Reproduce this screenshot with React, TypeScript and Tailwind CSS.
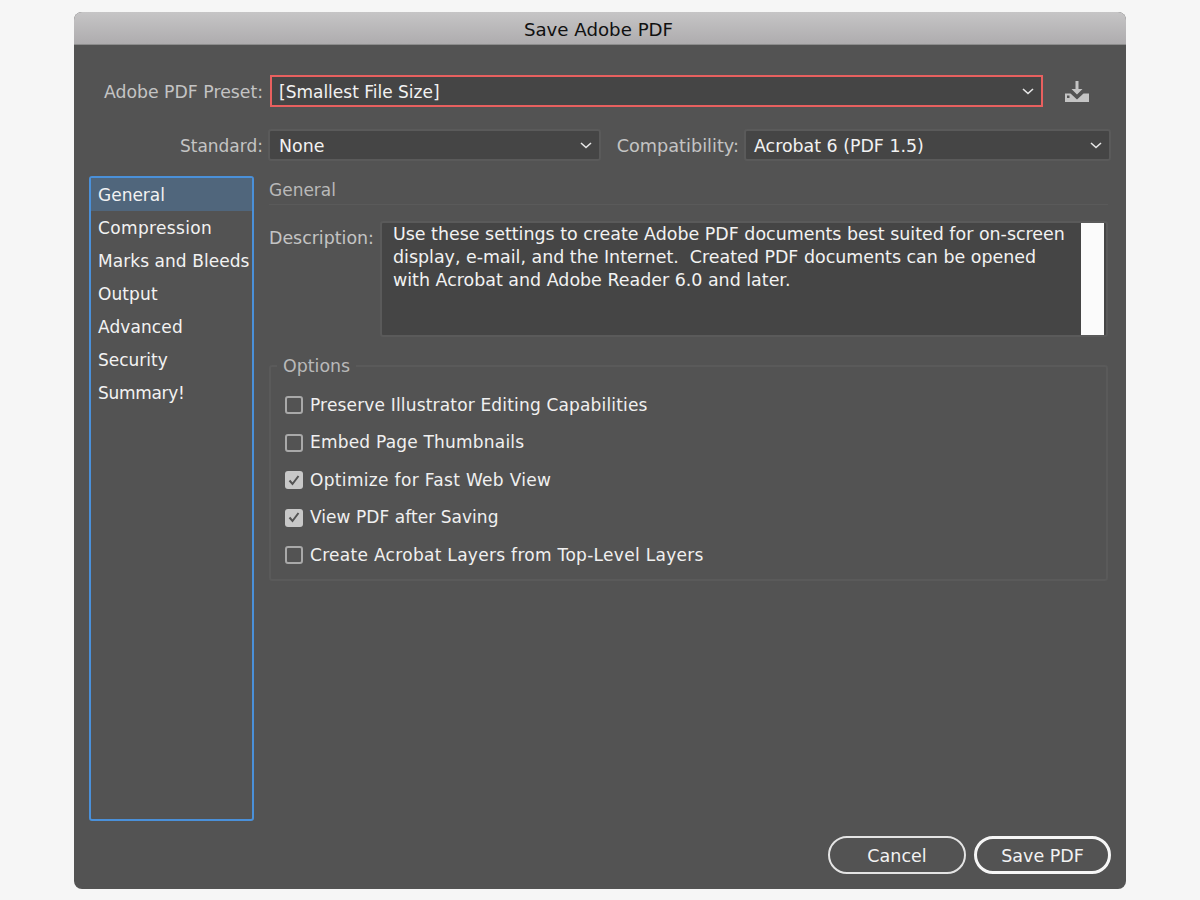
import React from "react";

const font = { fontFamily: '"DejaVu Sans", "Liberation Sans", sans-serif' };

const Chevron = () => (
  <svg width="12" height="7" viewBox="0 0 12 7" fill="none" stroke="#e6e6e6" strokeWidth="1.6">
    <path d="M1 1l5 4.5L11 1" />
  </svg>
);

const SaveIcon = () => (
  <svg width="24" height="21" viewBox="0 0 24 21" fill="#c4c4c4">
    <path d="M10.5 0h3v8h4l-5.500 5.500L6.500 8h4z" />
    <path d="M0 12.500h5.500l6.500 6 6.500-6H24V21H0z" />
    <rect x="2" y="14.500" width="2.500" height="2.500" fill="#535353" />
  </svg>
);

const CheckRow = ({ label, checked, spacing }: { label: string; checked?: boolean; spacing: string }) => (
  <div className="flex items-center h-[20px] gap-[7px]">
    {checked ? (
      <span className="w-[18px] h-[18px] rounded-[3px] bg-[#c8c8c8] flex items-center justify-center">
        <svg width="12" height="11" viewBox="0 0 12 11" fill="none" stroke="#535353" strokeWidth="2">
          <path d="M1.500 5.500l3 3.500 6-8" />
        </svg>
      </span>
    ) : (
      <span className="w-[18px] h-[18px] rounded-[3px] border-2 border-[#a9a9a9]" />
    )}
    <span className={`text-[#f0f0f0] text-[17px] pt-[1px] ${spacing}`}>{label}</span>
  </div>
);

const Select = ({ value, className }: { value: string; className: string }) => (
  <div className={`flex items-center justify-between bg-[#454545] rounded-[3px] border-2 border-[#5a5a5a] pr-[7px] ${className}`}>
    <span className="text-[#f2f2f2] text-[17.400px] pt-[3px]">{value}</span>
    <Chevron />
  </div>
);

const navItems = [
  { label: "Compression", spacing: "tracking-[0.35px]" },
  { label: "Marks and Bleeds", spacing: "tracking-[0.06px]" },
  { label: "Output", spacing: "tracking-[0.1px]" },
  { label: "Advanced", spacing: "tracking-[0.1px]" },
  { label: "Security", spacing: "tracking-[0px]" },
  { label: "Summary!", spacing: "tracking-[-0.3px]" },
];

const options = [
  { label: "Preserve Illustrator Editing Capabilities", spacing: "tracking-[0.17px]" },
  { label: "Embed Page Thumbnails", spacing: "tracking-[0.2px]" },
  { label: "Optimize for Fast Web View", checked: true, spacing: "tracking-[0.33px]" },
  { label: "View PDF after Saving", checked: true, spacing: "tracking-[0.05px]" },
  { label: "Create Acrobat Layers from Top-Level Layers", spacing: "tracking-[0.3px]" },
];

export default function App() {
  return (
    <div className="w-[1200px] h-[900px] bg-[#f6f6f6] pt-[12px] pl-[74px] overflow-hidden" style={font}>
      <div className="w-[1052px] h-[877px] rounded-[8px] overflow-hidden bg-[#535353] flex flex-col">
        <div className="h-[33px] shrink-0 bg-gradient-to-b from-[#c6c5c6] to-[#aeacae] border-b border-[#8c8c8c] flex items-center justify-center pt-[3px] pr-[3px] text-[#111] text-[18.200px]">
          Save Adobe PDF
        </div>

        <div className="flex flex-col flex-1 pt-[30px] pl-[15px] pr-[15px] pb-[15px]">
          <div className="flex items-center h-[32px]">
            <span className="w-[174px] pt-[3px] text-right text-[#c4c4c4] text-[17.300px] whitespace-nowrap">Adobe PDF Preset:</span>
            <div className="ml-[7px] w-[773px] h-[32px] flex items-center justify-between bg-[#454545] border-2 border-[#e8605f] pl-[7px] pr-[7px]">
              <span className="text-[#f2f2f2] text-[17px] pt-[3px]">[Smallest File Size]</span>
              <Chevron />
            </div>
            <span className="ml-[22px]"><SaveIcon /></span>
          </div>

          <div className="flex items-center h-[32px] mt-[22px]">
            <span className="w-[174px] pt-[3px] text-right text-[#c4c4c4] text-[17px]">Standard:</span>
            <Select value="None" className="ml-[5px] w-[333px] h-[32px] pl-[9px]" />
            <span className="w-[138px] pt-[3px] text-right text-[#c4c4c4] text-[17.700px]">Compatibility:</span>
            <Select value="Acrobat 6 (PDF 1.5)" className="ml-[5px] w-[367px] h-[32px] pl-[8px]" />
          </div>

          <div className="flex mt-[15px] flex-1">
            <div className="w-[165px] h-[645px] shrink-0 border-2 border-[#4a90d9] rounded-[3px] text-[#f2f2f2] text-[17px]">
              <div className="h-[33px] bg-[#50667c] pl-[7px] pt-[3px] flex items-center">General</div>
              {navItems.map((item) => (
                <div key={item.label} className={`h-[33px] pl-[7px] pt-[3px] flex items-center whitespace-nowrap ${item.spacing}`}>{item.label}</div>
              ))}
            </div>

            <div className="ml-[15px] w-[839px] flex flex-col">
              <div className="text-[#b9b9b9] text-[17px] h-[29px] border-b border-[#5a5a5a] leading-[28px]">General</div>
              <div className="flex mt-[16px]">
                <span className="w-[111px] text-[#c4c4c4] text-[17.400px] whitespace-nowrap leading-[34px]">Description:</span>
                <div className="flex w-[728px] h-[116px] border-2 border-[#5a5a5a] rounded-[3px] bg-[#454545] pr-[2px]">
                  <p className="flex-1 pl-[11px] text-[#f2f2f2] text-[17.450px] leading-[23px] whitespace-pre">
                    {"Use these settings to create Adobe PDF documents best suited for on-screen\ndisplay, e-mail, and the Internet.  Created PDF documents can be opened\nwith Acrobat and Adobe Reader 6.0 and later."}
                  </p>
                  <div className="w-[23px] bg-[#fbfbfb]" />
                </div>
              </div>

              <div className="relative mt-[28px] h-[216px] border-2 border-[#5a5a5a] rounded-[3px] pl-[14px] pt-[28px] flex flex-col gap-[17.500px]">
                <span className="absolute left-[6px] -top-[11px] px-[6px] bg-[#535353] text-[#b9b9b9] text-[17.400px] leading-[20px]">Options</span>
                {options.map((o) => (
                  <CheckRow key={o.label} label={o.label} checked={o.checked} spacing={o.spacing} />
                ))}
              </div>
            </div>
          </div>

          <div className="flex justify-end gap-[8px] -mt-[1px]">
            <button className="w-[138px] h-[38px] rounded-full border-2 border-[#e4e4e4] pt-[3px] text-[#f2f2f2] text-[17.500px]">Cancel</button>
            <button className="w-[137px] h-[38px] rounded-full border-[3px] border-[#f6f6f6] pt-[3px] text-[#f2f2f2] text-[17.500px]">Save PDF</button>
          </div>
        </div>
      </div>
    </div>
  );
}
